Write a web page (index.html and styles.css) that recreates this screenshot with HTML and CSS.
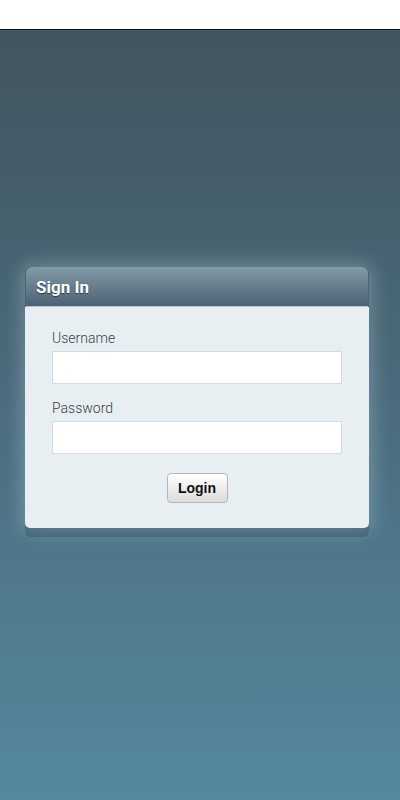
FILE: index.html
```html
<!DOCTYPE html>
<html>
<head>
<meta charset="utf-8">
<link rel="stylesheet" href="styles.css">
</head>
<body>
<div class="topbar"></div>
<main class="stage">
  <section class="card">
    <header class="card-head">Sign In</header>
    <form class="card-body">
      <label class="field-label" for="u">Username</label>
      <input class="field" id="u" type="text">
      <label class="field-label" for="p">Password</label>
      <input class="field" id="p" type="password">
      <div class="actions"><button class="btn" type="button">Login</button></div>
    </form>
  </section>
</main>
</body>
</html>
```
FILE: styles.css
```css
html, body { margin: 0; padding: 0; }
body { width: 400px; height: 800px; overflow: hidden; font-family: Roboto, "Liberation Sans", sans-serif; display: flex; flex-direction: column; }
.topbar { height: 29px; background: #fff; border-bottom: 1px solid #0b1a28; flex: none; }
.stage { flex: 1; background: linear-gradient(to bottom, #42555f 0%, #4a6a7a 45%, #5589a0 100%); padding: 237px 31px 0 25px; }
.card { border-radius: 6px; box-shadow: 0 0 18px 4px rgba(200,220,230,0.3), 0 9px 0 0 rgba(40,80,100,0.55); }
.card-head { height: 40px; box-sizing: border-box; padding: 10px 10px 0 10px; border-radius: 6px 6px 0 0; background: linear-gradient(to bottom, #8299a6, #4b6373); color: #fff; font-weight: 700; font-size: 17px; text-shadow: 0 1px 1px rgba(0,0,0,0.5); border-bottom: 1px solid #b9c8d0; margin: 0 1px; }
.card-body { margin: 0; background: #e8eff2; border-radius: 0 0 5px 5px; padding: 23px 27px 25px 27px; display: flex; flex-direction: column; }
.field-label { font-size: 14px; font-weight: 300; color: #3a3f44; line-height: 17px; margin-bottom: 4px; }
.field { height: 33px; box-sizing: border-box; border: 1px solid #d2dbe2; background: #fff; margin: 0 0 16px 0; padding: 0; }
.field:last-of-type { margin-bottom: 19px; }
.actions { display: flex; justify-content: center; }
.btn { width: 61px; height: 30px; box-sizing: border-box; border: 1px solid #b4b8bb; border-radius: 4px; background: linear-gradient(to bottom, #ffffff, #dcdcdc); font-family: "Liberation Sans", Arial, sans-serif; font-weight: 700; font-size: 14px; color: #111; padding: 0; }
```
